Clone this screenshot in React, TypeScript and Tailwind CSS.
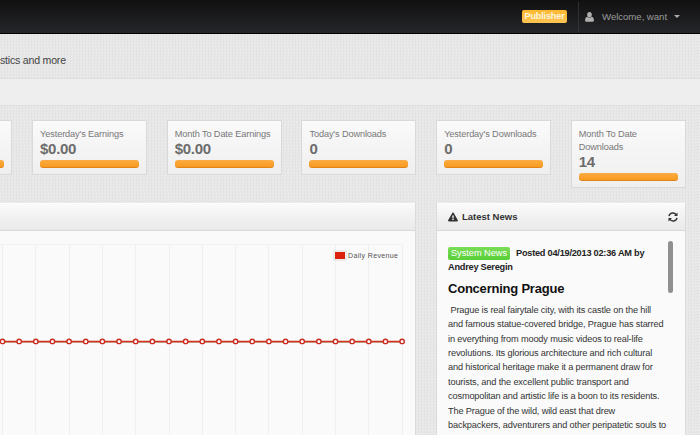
import { FaExclamationTriangle } from 'react-icons/fa';

const stats = [
  { label: "Yesterday's Earnings", value: '$0.00' },
  { label: 'Month To Date Earnings', value: '$0.00' },
  { label: "Today's Downloads", value: '0' },
  { label: "Yesterday's Downloads", value: '0' },
  { label: 'Month To Date Downloads', value: '14' },
];

const article = [
  '\u00a0Prague is real fairytale city, with its castle on the hill',
  'and famous statue-covered bridge, Prague has starred',
  'in everything from moody music videos to real-life',
  'revolutions. Its glorious architecture and rich cultural',
  'and historical heritage make it a permanent draw for',
  'tourists, and the excellent public transport and',
  'cosmopolitan and artistic life is a boon to its residents.',
  'The Prague of the wild, wild east that drew',
  'backpackers, adventurers and other peripatetic souls to',
];

const points = Array.from({ length: 25 }, (_, i) => 2.5 + i * 16.65);
const gridLines = points.filter((_, i) => i % 2 === 0);

function StatCard({ label, value }: { label: string; value: string }) {
  return (
    <div className="w-[115px] shrink-0 border border-[#d9d9d9] bg-gradient-to-b from-[#fafafa] to-[#efefef] px-[7px] pt-[7px] pb-[6px]">
      <div className="text-[9.2px] leading-[13px] tracking-[-0.12px] text-[#777]">{label}</div>
      <div className="text-[15px] leading-[16px] font-bold tracking-[-0.3px] text-[#6c6c6c]">{value}</div>
      <div className="mt-[3px] h-[8px] rounded-[3px] border-b border-[#dd851b] bg-gradient-to-b from-[#fbac42] to-[#f89a1c]" />
    </div>
  );
}

function Chart() {
  return (
    <svg className="block" width="415" height="204" viewBox="0 231 415 204">
      <path d="M0 244.5H402.5" stroke="#f1f1f1" />
      {gridLines.map((x) => (
        <path key={x} d={`M${Math.floor(x) + 0.5} 244V435`} stroke="#f0f0f0" />
      ))}
      <rect x="334" y="251" width="12" height="9" fill="#fff" stroke="#ccc" strokeWidth=".7" />
      <rect x="335" y="252" width="10" height="7" fill="#dc210f" />
      <text x="348" y="258" fontSize="7" textLength="50" fill="#545454">Daily Revenue</text>
      <path d="M0 342.4H402" stroke="#c8a98a" strokeWidth="1" />
      <path d="M0 341.4H402" stroke="#cc3322" strokeWidth="1.5" />
      {points.map((x) => (
        <circle key={x} cx={x} cy="341.4" r="2.2" fill="#fff" stroke="#cb2d20" strokeWidth="1.4" />
      ))}
    </svg>
  );
}

export default function App() {
  return (
    <div className="flex h-[435px] w-[700px] flex-col overflow-hidden bg-[repeating-conic-gradient(#e3e3e3_0_25%,#ebebeb_0_50%)] bg-[length:3px_3px] font-['Liberation_Sans',Arial,sans-serif]">
      <header className="flex h-[34px] shrink-0 items-center justify-end border-b border-black bg-gradient-to-b from-[#111] to-[#25262a]">
        <span className="mr-[11px] h-[13px] w-[45px] rounded-[2px] bg-gradient-to-b from-[#fbb82f] to-[#fdc453] text-center text-[9.2px] leading-[13px] font-bold tracking-[-0.2px] text-[#fff5dc]">Publisher</span>
        <div className="flex h-[30px] items-center border-l border-[#303134] pl-[6px] text-[#999]">
          <svg className="mr-[8px] h-[10px] w-[9px]" viewBox="0 0 9 10" fill="#b0b0b0">
            <ellipse cx="4.5" cy="2.8" rx="2.3" ry="2.7" />
            <path d="M2.2 4.8C.7 5.2.1 6.4.1 8.2.1 9.2.7 9.8 1.6 9.8H7.4C8.3 9.8 8.9 9.2 8.9 8.2 8.9 6.4 8.3 5.2 6.8 4.8 5.6 6 3.4 6 2.2 4.8Z" />
          </svg>
          <span className="w-[65px] pt-px text-[9.7px] tracking-[-0.08px] whitespace-nowrap">Welcome, want</span>
          <span className="mr-[20px] ml-[7px] border-x-[3px] border-t-[3px] border-x-transparent border-t-[#aaa]" />
        </div>
      </header>
      <div className="h-[44px] shrink-0 pt-[19px] text-[10.6px] leading-[14px] tracking-[-0.22px] whitespace-nowrap text-[#444]">stics and more</div>
      <div className="h-[28px] shrink-0 border-y border-[#dedede] bg-[#eeeeef]" />
      <section className="flex h-[97px] shrink-0 items-start gap-[19.7px] pt-[14px]">
        <div className="h-[55px] w-[12.4px] shrink-0 border border-l-0 border-[#d9d9d9] bg-gradient-to-b from-[#fafafa] to-[#efefef] pt-[39px] pr-[7px]">
          <div className="h-[8px] rounded-r-[3px] border-b border-[#dd851b] bg-gradient-to-b from-[#fbac42] to-[#f89a1c]" />
        </div>
        {stats.map((s) => <StatCard key={s.label} {...s} />)}
      </section>
      <main className="flex flex-1">
        <section className="mr-[20px] w-[416px] border-r border-[#dadada] bg-[#fafafa]">
          <div className="h-[28px] border-y border-t-white border-b-[#d9d9d9] bg-gradient-to-b from-[#fafafa] to-[#e9e9e9]" />
          <Chart />
        </section>
        <section className="flex w-[250px] flex-col border-x border-[#dadada] bg-[#fafafa] text-[#222]">
          <div className="flex h-[28px] items-center border-y border-t-white border-b-[#d9d9d9] bg-gradient-to-b from-[#fafafa] to-[#e9e9e9] pr-[7px] pl-[11px] text-[#333]">
            <FaExclamationTriangle className="mr-[4px] size-[10px]" />
            <h2 className="text-[9.5px] font-bold">Latest News</h2>
            <svg className="ml-auto size-[10px]" viewBox="0 0 10 10" fill="none" stroke="#333" strokeWidth="1.4">
              <path d="M1 4.1C1.7.5 6.3 0 8.4 2.8M9 5.9C8.3 9.5 3.7 10 1.6 7.2" />
              <path d="M9.5 0.5V4H6ZM.5 9.5V6H4Z" fill="#333" stroke="none" />
            </svg>
          </div>
          <div className="flex pt-[10px] pr-[11px] pl-[11px]">
            <article className="w-[220px] shrink-0 whitespace-nowrap">
              <div className="pt-[5px] text-[9.2px] leading-[14.4px] font-bold tracking-[-0.23px]">
                <span className="mr-[6px] inline-block h-[13px] w-[62px] rounded-[2px] bg-gradient-to-b from-[#7bdc58] to-[#57cf35] text-center leading-[13px] font-normal tracking-normal text-white">System News</span>
                Posted 04/19/2013 02:36 AM by<br />Andrey Seregin
              </div>
              <h3 className="mt-[5px] mb-[5px] text-[13px] leading-[18px] font-bold tracking-[-0.22px] text-[#111]">Concerning Prague</h3>
              <div className="text-[9.2px] leading-[14.4px] tracking-[-0.14px] text-[#333]">
                {article.map((line) => <p key={line}>{line}</p>)}
              </div>
            </article>
            <div className="h-[52px] w-[5px] shrink-0 rounded-full bg-[#909090]" />
          </div>
        </section>
      </main>
    </div>
  );
}
